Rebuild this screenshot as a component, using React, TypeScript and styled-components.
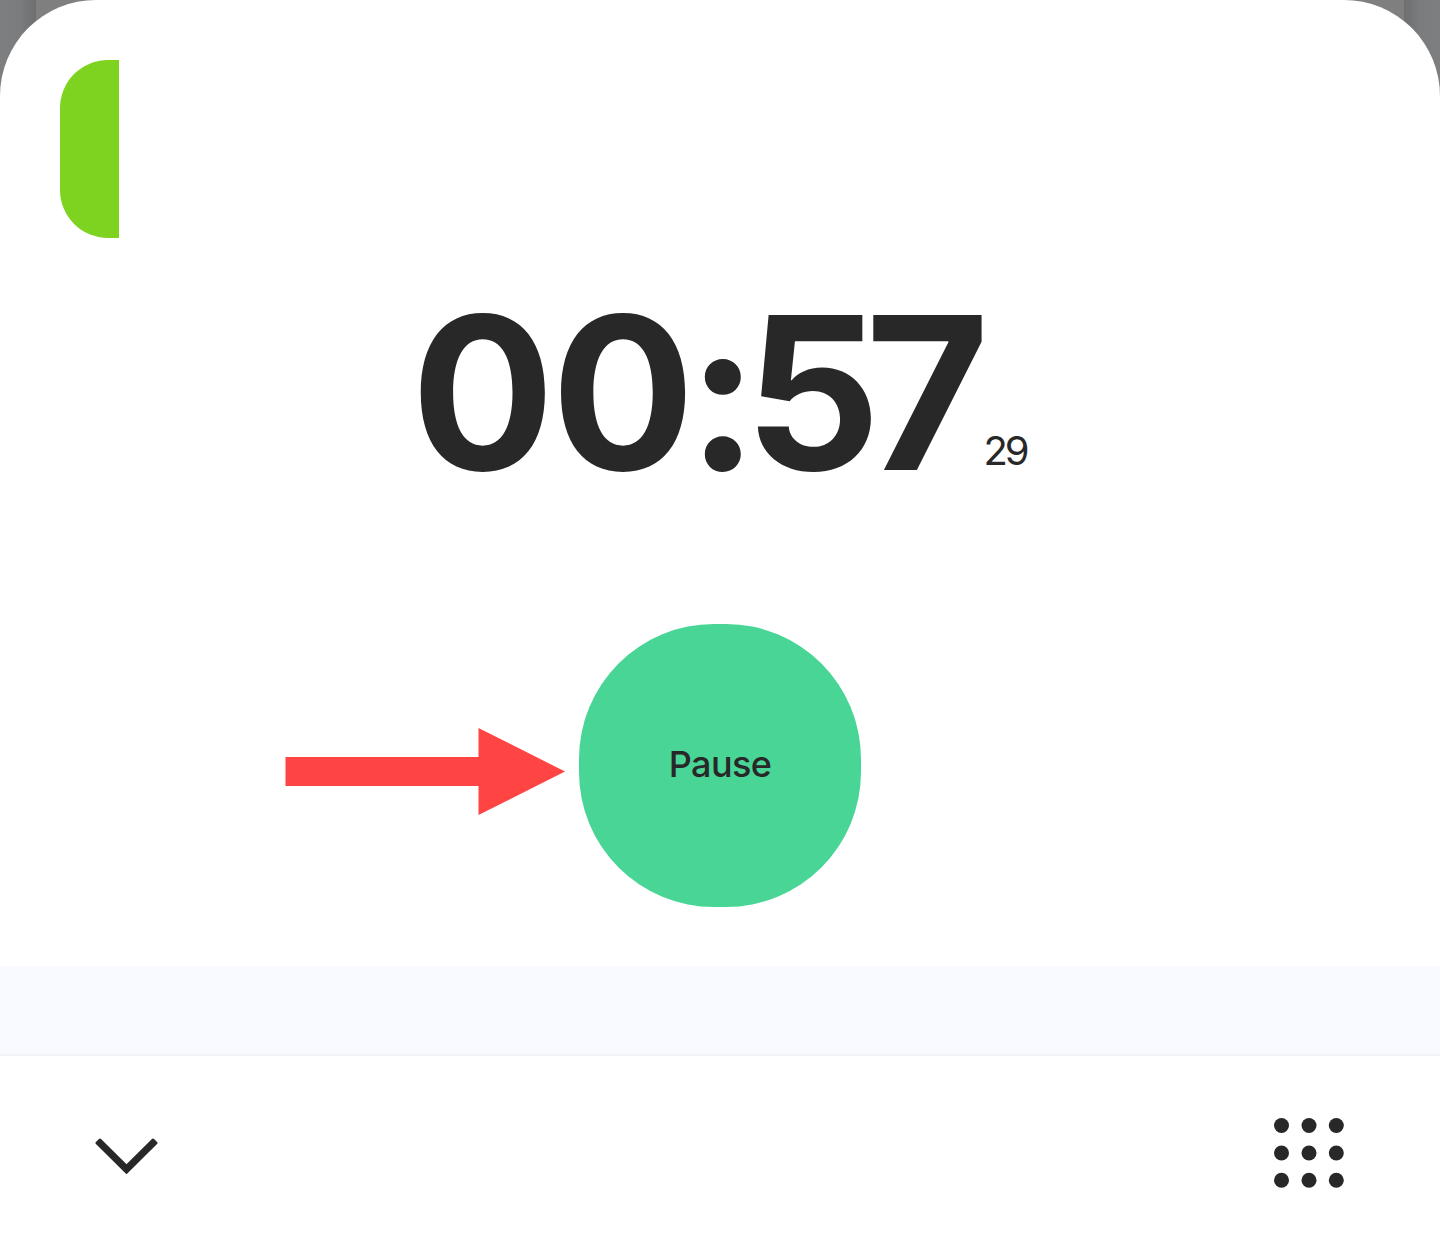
import React from "react";

import styled, { createGlobalStyle } from "styled-components";

const textColor = "#282828";

export default function App() {
  return (
    <Backdrop>
      <GlobalStyle />
      <Sheet>
        <TimerPanel>
          <Progress />
          <Clock>
            <Digit $spacing={-3.5}>0</Digit>
            <Digit $spacing={-7.5}>0</Digit>
            <Digit $spacing={-14}>:</Digit>
            <Digit $spacing={-15}>5</Digit>
            <Digit $spacing={-6}>7</Digit>
            <Hundredths>29</Hundredths>
          </Clock>
          <Controls>
            <Arrow viewBox="0 0 280 87">
              <path d="M0.5 29H193.500V0L280 43.500L193.500 87V58H0.500Z" />
            </Arrow>
            <PauseButton>Pause</PauseButton>
          </Controls>
        </TimerPanel>
        <Divider />
        <BottomBar>
          <Chevron viewBox="0 0 64 38">
            <path d="M6 3L32.500 29.300L59 3L62 6L32.500 35.300L3 6Z" />
          </Chevron>
          <DotGrid viewBox="0 0 70 70">
            {[7.5, 35, 62.300].map((y) =>
              [7.5, 35, 62.300].map((x) => (
                <circle key={`${x}-${y}`} cx={x} cy={y} r={7.5} />
              ))
            )}
          </DotGrid>
        </BottomBar>
      </Sheet>
    </Backdrop>
  );
}

const GlobalStyle = createGlobalStyle`
  body {
    margin: 0;
    font-family: Inter, "Liberation Sans", sans-serif;
    color: ${textColor};
  }
`;

// Dimmed page behind the sheet
const Backdrop = styled.div`
  background: linear-gradient(
    to right,
    #7d7e80 0,
    #7b7c7e 20px,
    #6e6f71 36px,
    #807f7f 36px,
    #807f7f 1404px,
    #6e6f71 1404px,
    #7b7c7e 1420px,
    #7d7e80 1440px
  );
  height: 1244px;
  overflow: hidden;
`;

const Sheet = styled.main`
  background: #fff;
  border-radius: 96px 96px 0 0;
  display: flex;
  flex-direction: column;
  height: 100%;
  overflow: hidden;
`;

const TimerPanel = styled.section`
  box-sizing: border-box;
  height: 966px;
  padding-top: 60px;
`;

const Progress = styled.div`
  background: #7ed321;
  border-radius: 48px 0 0 48px;
  height: 178px;
  margin-left: 60px;
  width: 59px;
`;

const Clock = styled.div`
  align-items: baseline;
  display: flex;
  font-size: 213px;
  font-weight: 700;
  height: 260px;
  line-height: 260px;
  margin: 25px 0 0 411px;
`;

const Digit = styled.span<{ $spacing: number }>`
  letter-spacing: ${({ $spacing }) => $spacing}px;
`;

const Hundredths = styled.span`
  font-size: 40px;
  font-weight: 400;
  letter-spacing: -3px;
  line-height: 1;
  transform: translateY(-5px);
`;

const Controls = styled.div`
  align-items: center;
  display: grid;
  grid-template-columns: 1fr 282px 1fr;
  margin-top: 101px;
`;

const Arrow = styled.svg`
  fill: #ff4444;
  height: 87px;
  justify-self: end;
  margin: 12px 14px 0 0;
  width: 280px;
`;

const PauseButton = styled.button`
  background: #49d596;
  border: 0;
  border-radius: 135px;
  color: ${textColor};
  font: 500 36px Inter, sans-serif;
  height: 283px;
  letter-spacing: -0.6px;
  padding: 0 0 4px;
`;

const Divider = styled.div`
  background: #f8faff;
  border-bottom: 2px solid #f0f2f6;
  box-sizing: border-box;
  height: 90px;
`;

const BottomBar = styled.nav`
  box-sizing: border-box;
  display: flex;
  flex: 1;
  justify-content: space-between;
  padding: 62px 96px 0 94px;
`;

const Chevron = styled.svg`
  fill: ${textColor};
  height: 38px;
  margin-top: 19px;
  stroke: ${textColor};
  stroke-linejoin: round;
  stroke-width: 3px;
  width: 64px;
`;

const DotGrid = styled.svg`
  fill: ${textColor};
  height: 70px;
  width: 70px;
`;
